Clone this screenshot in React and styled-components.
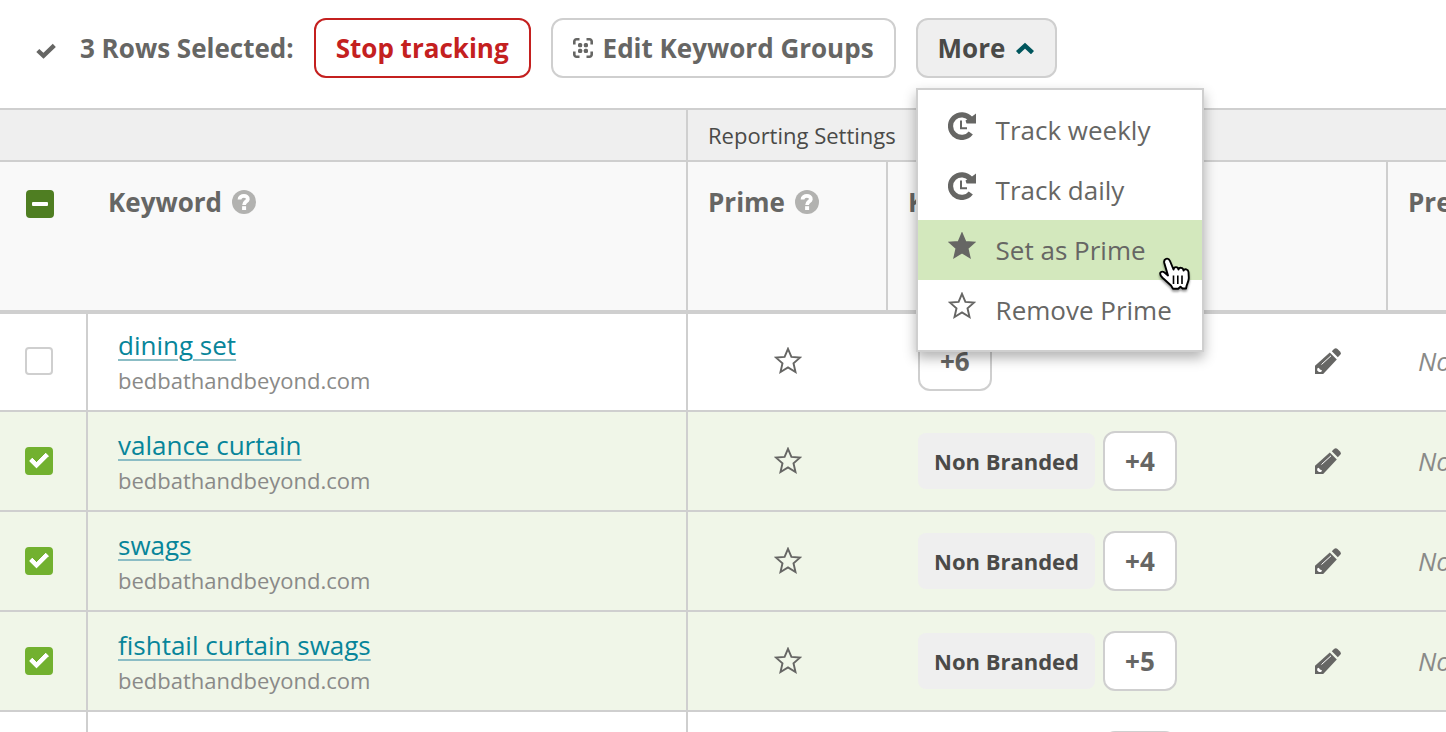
import { useEffect, useRef, useState } from "react";
import styled, { createGlobalStyle } from "styled-components";

const COLORS = {
  text: "#666664",
  dark: "#4a4a48",
  muted: "#8a8a88",
  line: "#cfcfcf",
  red: "#c4201f",
  link: "#07859a",
  linkLine: "#8bbdc5",
  green: "#72b12f",
  darkGreen: "#4f7e22",
  selected: "#f0f6e8",
  hover: "#d3e8bd",
  grey: "#efefef",
};

const STAR = "M14 1.8L17.400 9.900L26 10.600L19.500 16.300L21.500 25L14 20.400L6.500 25L8.500 16.300L2 10.600L10.600 9.900Z";

const ROWS = [
  { id: 1, keyword: "dining set", groups: null, more: "+6", checked: false },
  { id: 2, keyword: "valance curtain", groups: "Non Branded", more: "+4", checked: true },
  { id: 3, keyword: "swags", groups: "Non Branded", more: "+4", checked: true },
  { id: 4, keyword: "fishtail curtain swags", groups: "Non Branded", more: "+5", checked: true },
  { id: 5, keyword: "curtains", groups: "Non Branded", more: "+4", checked: false },
];

const CheckIcon = () => (
  <svg width="20" height="16" viewBox="0 0 20 16" aria-hidden="true">
    <path d="M1.800 7.500L7.500 12.800L18.300 2.300" fill="none" stroke="currentColor" strokeWidth="4.400" />
  </svg>
);

const GroupIcon = () => (
  <svg width="20" height="20" viewBox="0 0 20 20" aria-hidden="true">
    <path
      d="M1.300 6.500V3.500a2.200 2.200 0 0 1 2.200-2.200h3M13.500 1.300h3a2.200 2.200 0 0 1 2.200 2.200v3M18.700 13.500v3a2.200 2.200 0 0 1-2.200 2.200h-3M6.500 18.700h-3a2.200 2.200 0 0 1-2.200-2.200v-3"
      fill="none"
      stroke="currentColor"
      strokeWidth="2.600"
    />
    <g fill="currentColor">
      <rect x="5" y="5" width="4.200" height="4.200" rx="1.500" />
      <rect x="10.800" y="5" width="4.200" height="4.200" rx="1.500" />
      <rect x="5" y="10.800" width="4.200" height="4.200" rx="1.500" />
      <rect x="10.800" y="10.800" width="4.200" height="4.200" rx="1.500" />
    </g>
  </svg>
);

const ChevronIcon = () => (
  <svg width="20" height="12" viewBox="0 0 20 12" aria-hidden="true">
    <path d="M2.500 10.700L10 3.700l7.500 7" fill="none" stroke="#00565d" strokeWidth="4.400" />
  </svg>
);

const ClockIcon = () => (
  <svg width="28" height="28" viewBox="0 0 28 28" aria-hidden="true">
    <path d="M22.600 7A11.300 11.300 0 1 0 22.800 21" fill="none" stroke="currentColor" strokeWidth="5.200" />
    <path d="M28 1.500V11.500H18.500L17.500 8.500L24 4.500Z" fill="currentColor" />
    <path d="M13 8.500v7.800h6" fill="none" stroke="currentColor" strokeWidth="2" />
  </svg>
);

const StarIcon = ({ filled }) => (
  <svg width="28" height="28" viewBox="0 0 28 28" aria-hidden="true">
    <path d={STAR} fill={filled ? "currentColor" : "none"} stroke="currentColor" strokeWidth="1.900" />
  </svg>
);

const PencilIcon = () => (
  <svg width="26" height="26" viewBox="0 0 26 26" aria-hidden="true">
    <path
      d="M16.800 3.200L19 1a2.500 2.500 0 0 1 3.500 0L25 3.500a2.500 2.500 0 0 1 0 3.500l-2.200 2.200z"
      fill="currentColor"
    />
    <path d="M0 26v-8.200L14.800 4.500l7 7L8.200 26z" fill="currentColor" />
    <path d="M6.500 16.500L16 7.800" stroke="#fff" strokeWidth="1" />
    <path d="M2.200 20.500l1.600-.8 1.200 1.800 2 .7-.8 1.900H4l-1.800-1.600z" fill="#fff" />
  </svg>
);

const HelpIcon = () => (
  <svg width="24" height="24" viewBox="0 0 24 24" aria-hidden="true">
    <circle cx="12" cy="12" r="12" fill="#b2b2b0" />
    <path d="M7.500 9.500C7.600 4.600 16.300 4.800 15.800 9.200c-.3 2.600-3.700 2.400-3.700 5.800" fill="none" stroke="#fff" strokeWidth="3.800" />
    <rect x="10.100" y="16.200" width="4" height="3.800" fill="#fff" />
  </svg>
);

const HandIcon = () => (
  <svg width="34" height="38" viewBox="0 0 34 38" aria-hidden="true">
    <path
      d="M9 20.500L5.300 8C4.200 3.500 9.300 2 11 6l3.500 8.500c.5-3.200 4.500-3 5 0 .8-2.500 4.600-2.200 5 1 1-2.200 4.800-1.300 5 1.500l.3 6c0 4-2.500 6.500-2.700 10.500h-3.600l-2-1.800-2.300 2.100H14L12 30.500 3.500 22.800C-1 18.500 2 14.800 5.500 17.500z"
      fill="#fff"
      stroke="#000"
      strokeWidth="1.900"
      strokeLinejoin="round"
    />
    <path d="M14.500 20.500v8.500M18.800 20.500v8.500M23 20.500v8.500" stroke="#000" strokeWidth="1.600" />
  </svg>
);

const MENU = [
  { label: "Track weekly", icon: <ClockIcon /> },
  { label: "Track daily", icon: <ClockIcon /> },
  { label: "Set as Prime", icon: <StarIcon filled />, active: true },
  { label: "Remove Prime", icon: <StarIcon /> },
];

const SelectAll = () => {
  const ref = useRef(null);
  useEffect(() => {
    ref.current.indeterminate = true;
  }, []);
  return <Checkbox ref={ref} type="checkbox" aria-label="Select all keywords" />;
};

const KeywordRow = ({ row }) => {
  const [checked, setChecked] = useState(row.checked);

  return (
    <BodyRow $selected={checked}>
      <CheckCell>
        <Checkbox
          type="checkbox"
          aria-label={"Select " + row.keyword}
          checked={checked}
          onChange={() => setChecked(!checked)}
        />
      </CheckCell>
      <KeywordCell>
        <KeywordLink href="#">{row.keyword}</KeywordLink>
        <Domain>bedbathandbeyond.com</Domain>
      </KeywordCell>
      <PrimeCell>
        <IconButton aria-label="Toggle prime">
          <StarIcon />
        </IconButton>
      </PrimeCell>
      <Cell>
        <Groups>
          {row.groups && <Tag>{row.groups}</Tag>}
          <CountButton>{row.more}</CountButton>
          <EditButton aria-label="Edit groups">
            <PencilIcon />
          </EditButton>
        </Groups>
      </Cell>
      <UrlCell>None</UrlCell>
    </BodyRow>
  );
};

export default function App() {
  const [open, setOpen] = useState(true);

  return (
    <Page>
      <GlobalStyle />
      <Toolbar>
        <Selection>
          <CheckIcon />
          <SelectionText>3 Rows Selected:</SelectionText>
        </Selection>
        <Button $danger>Stop tracking</Button>
        <Button>
          <GroupIcon />
          Edit Keyword Groups
        </Button>
        <MenuAnchor>
          <Button $open={open} aria-expanded={open} onClick={() => setOpen(!open)}>
            More
            <ChevronIcon />
          </Button>
          {open && (
            <Menu>
              {MENU.map((item) => (
                <MenuItem key={item.label} $active={item.active}>
                  <MenuIcon>{item.icon}</MenuIcon>
                  {item.label}
                </MenuItem>
              ))}
              <Pointer>
                <HandIcon />
              </Pointer>
            </Menu>
          )}
        </MenuAnchor>
      </Toolbar>
      <Table>
        <colgroup>
          <Col $width={88} />
          <Col $width={600} />
          <Col $width={200} />
          <Col $width={500} />
          <col />
        </colgroup>
        <thead>
          <tr>
            <GroupHead colSpan={2} $divider />
            <GroupHead colSpan={3}>Reporting Settings</GroupHead>
          </tr>
          <tr>
            <SelectHead>
              <SelectAll />
            </SelectHead>
            <Head $divider>
              <HeadLabel>
                Keyword <HelpIcon />
              </HeadLabel>
            </Head>
            <Head $divider>
              <HeadLabel>
                Prime <HelpIcon />
              </HeadLabel>
            </Head>
            <Head $divider>
              <HeadLabel>Keyword Groups</HeadLabel>
            </Head>
            <Head>
              <HeadLabel>Preferred URL</HeadLabel>
            </Head>
          </tr>
        </thead>
        <tbody>
          {ROWS.map((row) => (
            <KeywordRow key={row.id} row={row} />
          ))}
        </tbody>
      </Table>
    </Page>
  );
}

const GlobalStyle = createGlobalStyle`
  *,
  *::after {
    box-sizing: border-box;
  }

  body {
    margin: 0;
    background: #fff;
    color: ${COLORS.text};
    font-family: "Open Sans", sans-serif;
    font-size: 26px;
    line-height: 36px;
  }

  button {
    font: inherit;
    color: inherit;
    cursor: pointer;
  }

  svg {
    display: block;
    flex: none;
  }
`;

const Page = styled.main`
  height: 100vh;
  overflow: hidden;
`;

const Toolbar = styled.div`
  display: flex;
  align-items: center;
  gap: 20px;
  padding: 18px 36px 30px;
  white-space: nowrap;
`;

const Selection = styled.div`
  display: flex;
  align-items: center;
  gap: 24px;

  svg {
    margin-top: 6px;
  }
`;

const SelectionText = styled.span`
  font-weight: 700;
`;

const Button = styled.button`
  display: flex;
  align-items: center;
  gap: 10px;
  height: 60px;
  padding: 0 20px;
  border: 2px solid ${({ $danger }) => ($danger ? COLORS.red : COLORS.line)};
  border-radius: 12px;
  background: ${({ $open }) => ($open ? COLORS.grey : "#fff")};
  color: ${({ $danger, $open }) => ($danger ? COLORS.red : $open ? COLORS.dark : COLORS.text)};
  font-weight: 700;
`;

const MenuAnchor = styled.div`
  position: relative;
`;

const Menu = styled.div`
  position: absolute;
  z-index: 1;
  top: 70px;
  left: 0;
  width: 288px;
  padding: 10px 0;
  border: 2px solid ${COLORS.line};
  background: #fff;
  box-shadow: 0 6px 12px rgba(0, 0, 0, 0.3);
`;

const MenuItem = styled.button`
  display: flex;
  align-items: center;
  gap: 20px;
  width: 100%;
  height: 60px;
  padding: 0 30px;
  border: 0;
  background: ${({ $active }) => ($active ? COLORS.hover : "transparent")};
  white-space: nowrap;
`;

const MenuIcon = styled.span`
  display: flex;
  justify-content: center;
  width: 28px;
  padding-bottom: 8px;
`;

const Pointer = styled.div`
  position: absolute;
  top: 165px;
  left: 241px;
  pointer-events: none;
  filter: drop-shadow(0 2px 1px rgba(0, 0, 0, 0.4));
`;

const Table = styled.table`
  width: 100%;
  table-layout: fixed;
  border-collapse: separate;
  border-spacing: 0;
`;

const Col = styled.col`
  width: ${({ $width }) => $width}px;
`;

const GroupHead = styled.th`
  height: 54px;
  padding: 0 20px;
  border: solid ${COLORS.line};
  border-width: ${({ $divider }) => ($divider ? "2px 2px 2px 0" : "2px 0")};
  background: ${COLORS.grey};
  color: ${COLORS.dark};
  font-size: 22px;
  font-weight: 400;
  line-height: 30px;
  text-align: left;
`;

const Head = styled.th`
  height: 150px;
  padding: 22px 20px;
  border: solid ${COLORS.line};
  border-width: ${({ $divider }) => ($divider ? "0 2px 2px 0" : "0 0 2px")};
  background: #f9f9f9;
  overflow: hidden;
  text-align: left;
  vertical-align: top;
  white-space: nowrap;
`;

const SelectHead = styled(Head)`
  padding: 28px 26px;
`;

const HeadLabel = styled.div`
  display: flex;
  align-items: center;
  gap: 10px;
`;

const Cell = styled.td`
  height: 100px;
  padding: 0 30px;
  border-bottom: 2px solid ${COLORS.line};
  overflow: hidden;
  white-space: nowrap;
`;

const CheckCell = styled(Cell)`
  padding: 0 25px;
  border-right: 2px solid ${COLORS.line};
`;

const KeywordCell = styled(Cell)`
  border-right: 2px solid ${COLORS.line};
`;

const PrimeCell = styled(Cell)`
  padding: 0;
`;

const UrlCell = styled(Cell)`
  padding-right: 0;
  color: ${COLORS.muted};
  font-style: italic;
`;

const BodyRow = styled.tr`
  background: ${({ $selected }) => ($selected ? COLORS.selected : "#fff")};

  &:first-child td {
    box-shadow: inset 0 2px ${COLORS.line};
  }
`;

const Checkbox = styled.input`
  appearance: none;
  display: grid;
  place-items: center;
  width: 28px;
  height: 28px;
  margin: 0;
  border: 2px solid ${COLORS.line};
  border-radius: 4px;
  background: #fff;

  &:checked {
    border-color: ${COLORS.green};
    background: ${COLORS.green};
  }

  &:checked::after {
    content: "";
    width: 18px;
    height: 11px;
    margin-bottom: 5px;
    border: solid #fff;
    border-width: 0 0 5px 5px;
    border-radius: 1px;
    transform: rotate(-45deg);
  }

  &:indeterminate {
    border-color: ${COLORS.darkGreen};
    background: ${COLORS.darkGreen};
  }

  &:indeterminate::after {
    content: "";
    width: 16px;
    height: 4px;
    border-radius: 1px;
    background: #fff;
  }
`;

const KeywordLink = styled.a`
  color: ${COLORS.link};
  text-decoration: underline 2px ${COLORS.linkLine};
  text-underline-offset: 4px;
`;

const Domain = styled.div`
  margin-top: 2px;
  color: ${COLORS.muted};
  font-size: 22px;
  line-height: 30px;
`;

const IconButton = styled.button`
  display: block;
  margin: 0 auto;
  padding: 0;
  border: 0;
  background: none;
`;

const EditButton = styled(IconButton)`
  margin: 0 17px 0 auto;
`;

const Groups = styled.div`
  display: flex;
  align-items: center;
  gap: 8px;
`;

const Tag = styled.span`
  padding: 13px 16px;
  border-radius: 8px;
  background: ${COLORS.grey};
  color: ${COLORS.dark};
  font-size: 22px;
  font-weight: 700;
  line-height: 30px;
`;

const CountButton = styled.button`
  height: 60px;
  padding: 0 20px;
  border: 2px solid ${COLORS.line};
  border-radius: 12px;
  background: #fff;
  font-weight: 700;
`;
